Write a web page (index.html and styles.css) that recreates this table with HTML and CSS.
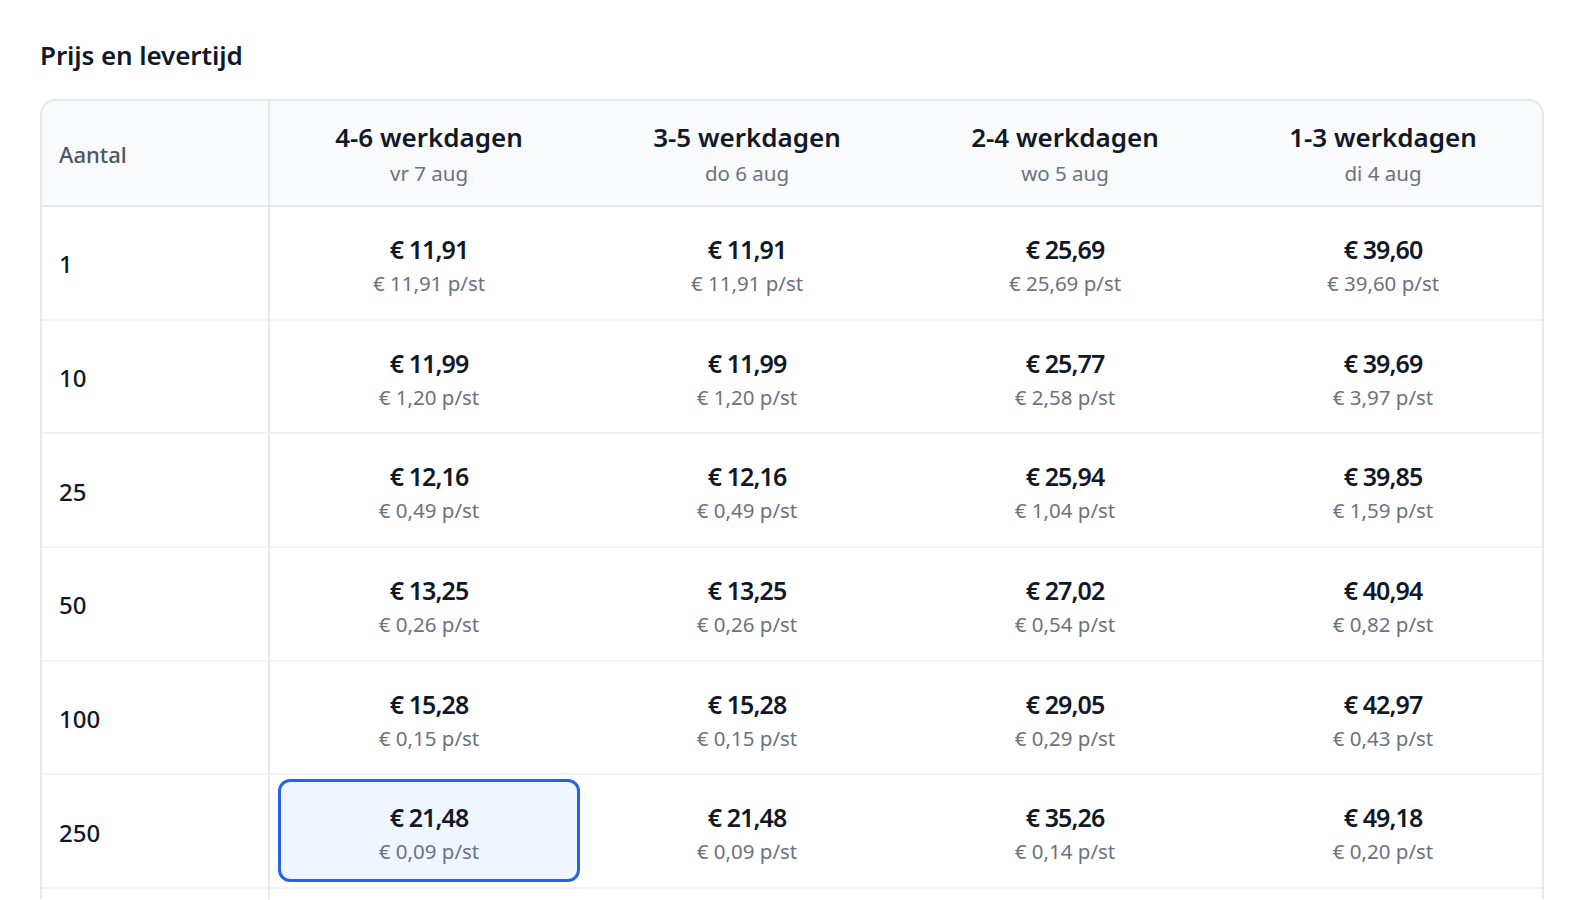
FILE: index.html
```html
<!DOCTYPE html>
<html lang="nl">
<head>
<meta charset="utf-8">
<title>Prijs en levertijd</title>
<link rel="stylesheet" href="styles.css">
</head>
<body>
<section class="page">
  <h2 class="title">Prijs en levertijd</h2>
  <div class="table">
    <div class="hcell label">Aantal</div>
    <div class="hcell"><span class="ht">4-6 werkdagen</span><span class="hs">vr 7 aug</span></div>
    <div class="hcell"><span class="ht">3-5 werkdagen</span><span class="hs">do 6 aug</span></div>
    <div class="hcell"><span class="ht">2-4 werkdagen</span><span class="hs">wo 5 aug</span></div>
    <div class="hcell"><span class="ht">1-3 werkdagen</span><span class="hs">di 4 aug</span></div>

    <div class="qcell">1</div>
    <div class="pcell"><div class="box"><span class="pr">€ 11,91</span><span class="ps">€ 11,91 p/st</span></div></div>
    <div class="pcell"><div class="box"><span class="pr">€ 11,91</span><span class="ps">€ 11,91 p/st</span></div></div>
    <div class="pcell"><div class="box"><span class="pr">€ 25,69</span><span class="ps">€ 25,69 p/st</span></div></div>
    <div class="pcell"><div class="box"><span class="pr">€ 39,60</span><span class="ps">€ 39,60 p/st</span></div></div>

    <div class="qcell">10</div>
    <div class="pcell"><div class="box"><span class="pr">€ 11,99</span><span class="ps">€ 1,20 p/st</span></div></div>
    <div class="pcell"><div class="box"><span class="pr">€ 11,99</span><span class="ps">€ 1,20 p/st</span></div></div>
    <div class="pcell"><div class="box"><span class="pr">€ 25,77</span><span class="ps">€ 2,58 p/st</span></div></div>
    <div class="pcell"><div class="box"><span class="pr">€ 39,69</span><span class="ps">€ 3,97 p/st</span></div></div>

    <div class="qcell">25</div>
    <div class="pcell"><div class="box"><span class="pr">€ 12,16</span><span class="ps">€ 0,49 p/st</span></div></div>
    <div class="pcell"><div class="box"><span class="pr">€ 12,16</span><span class="ps">€ 0,49 p/st</span></div></div>
    <div class="pcell"><div class="box"><span class="pr">€ 25,94</span><span class="ps">€ 1,04 p/st</span></div></div>
    <div class="pcell"><div class="box"><span class="pr">€ 39,85</span><span class="ps">€ 1,59 p/st</span></div></div>

    <div class="qcell">50</div>
    <div class="pcell"><div class="box"><span class="pr">€ 13,25</span><span class="ps">€ 0,26 p/st</span></div></div>
    <div class="pcell"><div class="box"><span class="pr">€ 13,25</span><span class="ps">€ 0,26 p/st</span></div></div>
    <div class="pcell"><div class="box"><span class="pr">€ 27,02</span><span class="ps">€ 0,54 p/st</span></div></div>
    <div class="pcell"><div class="box"><span class="pr">€ 40,94</span><span class="ps">€ 0,82 p/st</span></div></div>

    <div class="qcell">100</div>
    <div class="pcell"><div class="box"><span class="pr">€ 15,28</span><span class="ps">€ 0,15 p/st</span></div></div>
    <div class="pcell"><div class="box"><span class="pr">€ 15,28</span><span class="ps">€ 0,15 p/st</span></div></div>
    <div class="pcell"><div class="box"><span class="pr">€ 29,05</span><span class="ps">€ 0,29 p/st</span></div></div>
    <div class="pcell"><div class="box"><span class="pr">€ 42,97</span><span class="ps">€ 0,43 p/st</span></div></div>

    <div class="qcell">250</div>
    <div class="pcell"><div class="box selected"><span class="pr">€ 21,48</span><span class="ps">€ 0,09 p/st</span></div></div>
    <div class="pcell"><div class="box"><span class="pr">€ 21,48</span><span class="ps">€ 0,09 p/st</span></div></div>
    <div class="pcell"><div class="box"><span class="pr">€ 35,26</span><span class="ps">€ 0,14 p/st</span></div></div>
    <div class="pcell"><div class="box"><span class="pr">€ 49,18</span><span class="ps">€ 0,20 p/st</span></div></div>

    <div class="qcell tail"></div>
    <div class="pcell tail"></div>
    <div class="pcell tail"></div>
    <div class="pcell tail"></div>
    <div class="pcell tail"></div>
  </div>
</section>
</body>
</html>
```

FILE: styles.css
```css
* { box-sizing: border-box; }
html, body { margin: 0; padding: 0; background: #ffffff; }
body {
  font-family: "Noto Sans", "Open Sans", "Liberation Sans", sans-serif;
  color: #111827;
}
.page {
  padding: 36px 0 0 40px;
}
.title {
  margin: 0 0 25px 0;
  font-size: 26px;
  line-height: 38px;
  font-weight: 600;
  color: #111827;
  letter-spacing: -0.1px;
}
.table {
  display: grid;
  grid-template-columns: 228px repeat(4, 1fr);
  grid-template-rows: 106px repeat(6, 113.7px) 10px;
  border: 2px solid #e5e7eb;
  border-bottom: none;
  border-radius: 16px 16px 0 0;
  overflow: hidden;
  width: 1504px;
}
.hcell {
  background: #f8fafc;
  border-bottom: 2px solid #e5e7eb;
  display: flex;
  flex-direction: column;
  align-items: center;
  justify-content: center;
  padding-top: 3px;
}
.hcell.label {
  align-items: flex-start;
  padding-left: 17px;
  padding-top: 2px;
  border-right: 2px solid #e5e7eb;
  font-size: 22px;
  font-weight: 500;
  color: #4b5563;
}
.ht {
  font-size: 26px;
  line-height: 36px;
  font-weight: 600;
  color: #111827;
}
.hs {
  font-size: 20.5px;
  line-height: 36px;
  color: #6b7280;
}
.qcell {
  display: flex;
  align-items: center;
  padding-left: 17px;
  padding-top: 2px;
  font-size: 24px;
  font-weight: 500;
  color: #111827;
  border-right: 2px solid #e5e7eb;
  border-bottom: 2px solid #f1f3f5;
}
.pcell {
  padding: 4px 8px 5px 8px;
  border-bottom: 2px solid #f1f3f5;
}
.tail { border-bottom: none; }
.box {
  height: 100%;
  border: 3px solid transparent;
  border-radius: 12px;
  display: flex;
  flex-direction: column;
  align-items: center;
  justify-content: center;
  padding-top: 7px;
}
.box.selected {
  border-color: #2563eb;
  background: #eff6ff;
}
.pr {
  font-size: 25px;
  line-height: 34px;
  font-weight: 600;
  color: #111827;
  letter-spacing: -0.9px;
}
.ps {
  font-size: 20.5px;
  line-height: 34px;
  color: #6b7280;
}
```
